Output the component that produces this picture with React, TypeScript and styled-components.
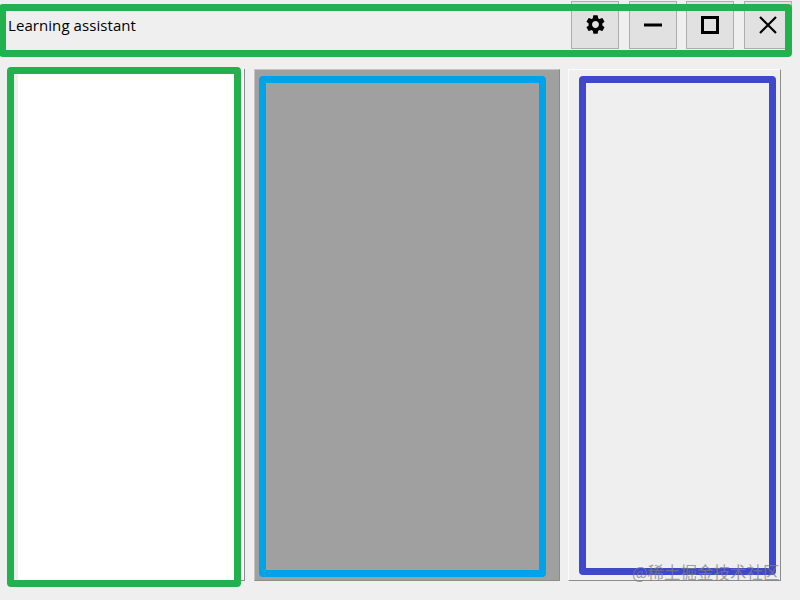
import React from 'react'
import styled, { createGlobalStyle } from 'styled-components'
import { MdSettings } from 'react-icons/md'

const GlobalStyle = createGlobalStyle`
    html, body {
        margin: 0;
        padding: 0;
        background: #efefef;
        overflow: hidden;
    }
    body {
        font-family: "Open Sans", "Noto Sans", sans-serif;
    }
`

const Page = styled.div`
    position: relative;
    width: 800px;
    height: 600px;
    padding-top: 1px;
    box-sizing: border-box;
    background: #efefef;
`

const TitleBar = styled.header`
    position: relative;
    display: flex;
    align-items: center;
    height: 48px;
    padding: 0 8.5px 0 8px;
`

const Title = styled.span`
    flex: 1;
    font-size: 15px;
    letter-spacing: 0.07px;
    color: #000;
`

const WindowButtons = styled.div`
    display: flex;
    gap: 9.5px;
`

const WindowButton = styled.button`
    display: flex;
    align-items: center;
    justify-content: center;
    box-sizing: border-box;
    width: 48px;
    height: 48px;
    padding: 0 0 1px;
    background: #e1e1e1;
    border: 1px solid #adadad;
    color: #000;
`

const Panels = styled.main`
    display: flex;
    gap: 8px;
    height: 512px;
    margin-top: 20px;
    padding-left: 8px;
`

const Panel = styled.section`
    position: relative;
    box-sizing: border-box;
    border-right: 1px solid #8c8c8c;
    border-bottom: 1px solid #8c8c8c;
`

const ListPanel = styled(Panel)`
    flex: 0 0 227px;
    margin-left: 10px;
    background: #fff;
`

const ViewPanel = styled(Panel)`
    flex: 0 0 306px;
    margin-left: 1px;
    background: #a0a0a0;
    border-top: 1px solid #c4c4c4;
    border-left: 1px solid #c4c4c4;
`

const SidePanel = styled(Panel)`
    flex: 0 0 213px;
    background: #efefef;
    border-top: 1px solid #fbfbfb;
    border-left: 1px solid #fbfbfb;
`

type FrameProps = {
    $color: string,
    $top: number,
    $right: number,
    $bottom: number,
    $left: number,
}

// the coloured outlines drawn on top of the screenshot
const Frame = styled.div<FrameProps>`
    position: absolute;
    top: ${(p) => p.$top}px;
    right: ${(p) => p.$right}px;
    bottom: ${(p) => p.$bottom}px;
    left: ${(p) => p.$left}px;
    border: 7px solid ${(p) => p.$color};
    border-radius: 4px;
    pointer-events: none;
`

const Watermark = styled.span`
    position: absolute;
    left: 632px;
    top: 561px;
    font-family: "Noto Sans CJK SC", sans-serif;
    font-size: 16.5px;
    line-height: 22px;
    white-space: nowrap;
    color: rgba(125, 125, 125, 0.72);
`

const MinimizeIcon = () => (
    <svg width="20" height="20" viewBox="0 0 20 20">
        <path d="M1 10h18" stroke="#000" strokeWidth="3" fill="none" />
    </svg>
)

const MaximizeIcon = () => (
    <svg width="20" height="20" viewBox="0 0 20 20">
        <rect x="2.5" y="2.5" width="15" height="15" stroke="#000" strokeWidth="3" fill="none" />
    </svg>
)

const CloseIcon = () => (
    <svg width="20" height="20" viewBox="0 0 20 20">
        <path d="M2 2l16 16M18 2L2 18" stroke="#000" strokeWidth="2.2" fill="none" />
    </svg>
)

export default function App() {
    return (
        <Page>
            <GlobalStyle />
            <TitleBar>
                <Title>Learning assistant</Title>
                <WindowButtons>
                    <WindowButton><MdSettings size={23} /></WindowButton>
                    <WindowButton><MinimizeIcon /></WindowButton>
                    <WindowButton><MaximizeIcon /></WindowButton>
                    <WindowButton><CloseIcon /></WindowButton>
                </WindowButtons>
                <Frame $color="#22b14c" $top={3} $right={8} $bottom={-8} $left={-1} />
            </TitleBar>
            <Panels>
                <ListPanel>
                    <Frame $color="#22b14c" $top={-2} $right={3} $bottom={-7} $left={-11} />
                </ListPanel>
                <ViewPanel>
                    <Frame $color="#00a2e8" $top={6} $right={13} $bottom={3} $left={4} />
                </ViewPanel>
                <SidePanel>
                    <Frame $color="#3f48cc" $top={6} $right={4} $bottom={5} $left={10} />
                </SidePanel>
            </Panels>
            <Watermark>@稀土掘金技术社区</Watermark>
        </Page>
    )
}
